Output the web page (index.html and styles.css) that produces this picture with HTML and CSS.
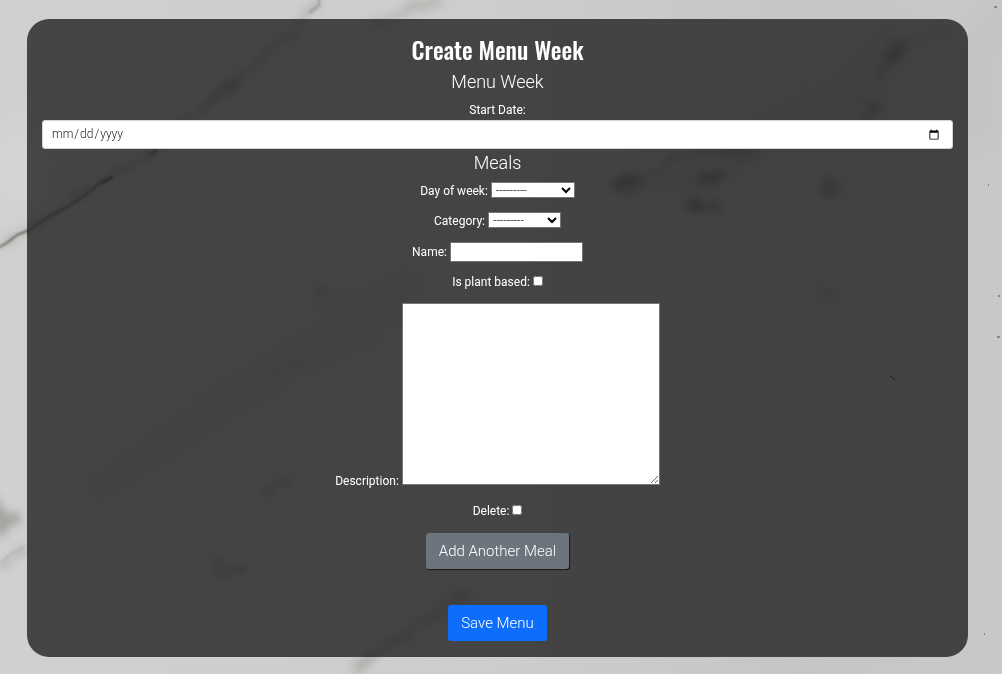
FILE: index.html
```html
<!DOCTYPE html>
<html lang="en">
<head>
<meta charset="utf-8">
<title>Create Menu Week</title>
<link rel="stylesheet" href="styles.css">
</head>
<body>
<svg class="marble" viewBox="0 0 1002 674" preserveAspectRatio="none" aria-hidden="true">
  <defs>
    <filter id="soft" x="-50%" y="-50%" width="200%" height="200%">
      <feTurbulence type="fractalNoise" baseFrequency="0.05" numOctaves="3" seed="4" result="noise"/>
      <feDisplacementMap in="SourceGraphic" in2="noise" scale="14" xChannelSelector="R" yChannelSelector="G"/>
      <feGaussianBlur stdDeviation="5"/>
    </filter>
    <filter id="blot" x="-50%" y="-50%" width="200%" height="200%">
      <feTurbulence type="fractalNoise" baseFrequency="0.08" numOctaves="4" seed="7" result="noise"/>
      <feDisplacementMap in="SourceGraphic" in2="noise" scale="34" xChannelSelector="R" yChannelSelector="G"/>
      <feGaussianBlur stdDeviation="4"/>
    </filter>
    <filter id="fine" x="-50%" y="-50%" width="200%" height="200%"><feGaussianBlur stdDeviation="1"/></filter>
    <filter id="wide" x="-50%" y="-50%" width="200%" height="200%"><feGaussianBlur stdDeviation="18"/></filter>
    <linearGradient id="stone" x1="0" y1="0" x2="1" y2="0">
      <stop offset="0" stop-color="#cfd0d0"/>
      <stop offset="0.5" stop-color="#cccdcc"/>
      <stop offset="0.8" stop-color="#c5c7c5"/>
      <stop offset="1" stop-color="#c8c9c8"/>
    </linearGradient>
  </defs>
  <rect width="1002" height="674" fill="url(#stone)"/>
  <g filter="url(#wide)" fill="none" stroke="#b0b3b0" stroke-width="24" opacity="0.4">
    <path d="M1010 0L975 60L980 150"/>
    <path d="M640 200L730 150L860 90L900 30"/>
    <path d="M80 500L260 380L420 280"/>
    <ellipse cx="20" cy="170" rx="12" ry="40" stroke="#dcdfe2"/>
  </g>
  <g filter="url(#soft)" fill="none" stroke="#77786c" stroke-width="5" opacity="0.38">
    <path d="M0 246L50 215L110 178L155 150L195 112L235 80L290 35L322 4"/>
    <path d="M372 26L400 12L440 0"/>
    <path d="M878 80L890 55L915 40L950 32"/>
    <path d="M610 190L650 175L680 155L750 150"/>
    <path d="M0 570L26 545"/>
    <path d="M355 674L372 656L420 625L470 590"/>
    <path d="M200 400L250 380L380 335" opacity="0.4"/>
  </g>
  <g filter="url(#blot)" fill="#4a4b3c" opacity="0.32">
    <ellipse cx="0" cy="518" rx="12" ry="16"/>
    <ellipse cx="226" cy="85" rx="11" ry="5"/>
    <ellipse cx="325" cy="293" rx="17" ry="4" opacity="0.6"/>
    <ellipse cx="626" cy="183" rx="14" ry="8"/>
    <ellipse cx="711" cy="178" rx="20" ry="7"/>
    <ellipse cx="700" cy="206" rx="13" ry="7"/>
    <ellipse cx="831" cy="186" rx="9" ry="8" opacity="0.8"/>
    <ellipse cx="873" cy="110" rx="10" ry="9"/>
    <ellipse cx="741" cy="152" rx="18" ry="4" opacity="0.8"/>
    <ellipse cx="895" cy="52" rx="8" ry="12" opacity="0.6"/>
    <ellipse cx="828" cy="296" rx="8" ry="6" opacity="0.7"/>
    <ellipse cx="274" cy="487" rx="11" ry="4" opacity="0.8"/>
    <ellipse cx="225" cy="570" rx="14" ry="5" opacity="0.8"/>
    <ellipse cx="364" cy="665" rx="7" ry="9" opacity="0.7"/>
  </g>
  <g filter="url(#fine)" fill="none" stroke="#55574a" stroke-linecap="round" stroke-linejoin="round">
    <path d="M0 247L8 242L17 235L27 231" stroke-width="2" opacity="0.85"/>
    <path d="M27 231L40 223L52 215L66 208L82 197L92 190L100 183L112 177" stroke-width="2" opacity="0.45"/>
    <path d="M102 183L112 177M152 154L156 151" stroke-width="3" opacity="0.35"/>
    <path d="M310 12L319 5V0" stroke-width="3" opacity="0.3"/>
    <path d="M2 562L12 553L24 547" stroke-width="1" opacity="0.3"/>
  </g>
  <g fill="none" stroke="#444640">
    <path d="M994 7h3M988 185h1M998 296h2M997 337h3M984 634h1"/>
    <path d="M890 376L895 380" opacity="0.8"/>
  </g>
</svg>
<main class="panel">
  <form class="menu-form">
    <h1 class="title">Create Menu Week</h1>
    <h2 class="section">Menu Week</h2>
    <label class="date-label" for="start">Start Date:</label>
    <input class="date" type="date" id="start">
    <h2 class="section">Meals</h2>
    <div class="meal">
      <div class="row"><label for="day">Day of week:</label>
        <select class="select select-day" id="day"><option>---------</option></select></div>
      <div class="row"><label for="category">Category:</label>
        <select class="select select-category" id="category"><option>---------</option></select></div>
      <div class="row"><label for="name">Name:</label>
        <input class="field" type="text" id="name"></div>
      <div class="row"><label for="plant">Is plant based:</label>
        <input class="check" type="checkbox" id="plant"></div>
      <div class="row"><label for="description">Description:</label>
        <textarea class="area" id="description"></textarea></div>
      <div class="row"><label for="delete">Delete:</label>
        <input class="check" type="checkbox" id="delete"></div>
    </div>
    <button class="button add" type="button">Add Another Meal</button>
    <button class="button save" type="submit">Save Menu</button>
  </form>
</main>
</body>
</html>
```

FILE: styles.css
```css
* { box-sizing: border-box; }

body {
  margin: 0;
  padding: 19px 34px 17px 27px;
  background: #cbcccc;
  color: #fff;
  font: 400 12px/19px Roboto, "Liberation Sans", sans-serif;
}

.marble {
  position: fixed;
  inset: 0;
  z-index: -1;
  width: 100%;
  height: 100%;
}

.panel {
  padding: 15px 15px 16px;
  border-radius: 22px;
  background: rgba(0, 0, 0, 0.67);
}

.menu-form {
  display: flex;
  flex-direction: column;
  align-items: center;
}

.title {
  margin: 0 0 6px;
  font-family: Oswald, Roboto, sans-serif;
  font-size: 24px;
  line-height: 30px;
  font-weight: 500;
}

.section {
  margin: 0 0 7px;
  font-size: 18px;
  line-height: 24px;
  font-weight: 300;
}

.date {
  width: 100%;
  height: 29px;
  margin-bottom: 2px;
  padding: 0 10px 0 8px;
  border: 1px solid #ced4da;
  border-radius: 3px;
  background: #fff;
  color: #212529;
  font: inherit;
  font-weight: 300;
}

.meal {
  display: flex;
  flex-direction: column;
  gap: 11px;
  width: 100%;
  margin-bottom: 12px;
  text-align: center;
}

.select,
.field,
.area {
  border: 1px solid #767676;
  border-radius: 0;
  background: #fff;
  color: #000;
  font: inherit;
}

.select {
  height: 16px;
  padding: 0;
  font-weight: 300;
  line-height: 14px;
}

.select-day { width: 84px; }
.select-category { width: 73px; }

.field {
  width: 133px;
  height: 20px;
  padding: 1px 2px;
}

.area {
  width: 258px;
  max-width: 100%;
  height: 182px;
  padding: 2px;
}

.check {
  width: 10px;
  height: 10px;
  margin: 0;
}

.button {
  padding: 6px 12px;
  border: 1px solid transparent;
  border-radius: 3px;
  color: #fff;
  font: inherit;
  font-size: 15px;
  font-weight: 300;
  line-height: 22px;
}

.add {
  margin-bottom: 36px;
  background: #6c757d;
  box-shadow: 1px 1px 1px #181818;
}

.save { background: #0d6efd; }
```
